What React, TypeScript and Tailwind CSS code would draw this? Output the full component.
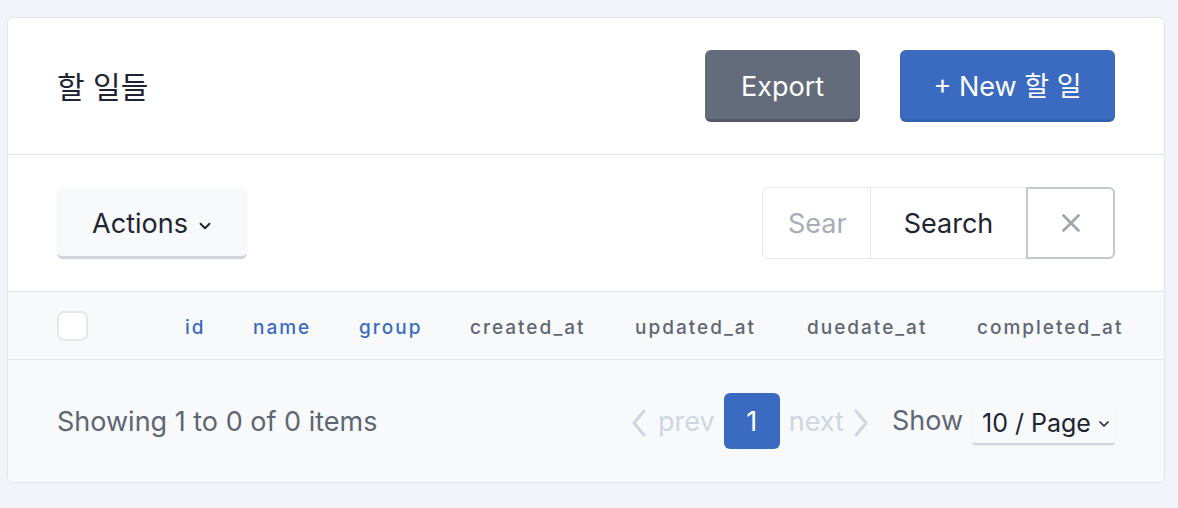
import { ChevronDown, X } from "lucide-react"

const columns = [
  { name: "id", width: "w-[68px]", active: true },
  { name: "name", width: "w-[106px]", active: true },
  { name: "group", width: "w-[111px]", active: true },
  { name: "created_at", width: "w-[165px]", active: false },
  { name: "updated_at", width: "w-[172px]", active: false },
  { name: "duedate_at", width: "w-[170px]", active: false },
  { name: "completed_at", width: "w-[150px]", active: false },
]

function Chevron({ dir }: { dir: "left" | "right" }) {
  return (
    <svg width="14" height="30" viewBox="0 0 14 30" fill="none" stroke="currentColor" strokeWidth="3" strokeLinecap="round" strokeLinejoin="round">
      {dir === "left" ? <polyline points="12,3 2,15 12,27" /> : <polyline points="2,3 12,15 2,27" />}
    </svg>
  )
}

export default function App() {
  return (
    <div className="min-h-[508px] bg-[#f1f4f9] pl-[7px] pt-[17px] font-['Inter','Noto_Sans_CJK_KR',sans-serif]">
      <div className="w-[1158px] overflow-hidden rounded-[6px] border border-[#e2e5ea] bg-white">
        {/* Header */}
        <div className="flex items-center justify-between border-b border-[#e2e5ea] px-[49px] py-[32px]">
          <h1 className="mt-[3px] text-[30px] text-[#1f2433]">할 일들</h1>
          <div className="flex gap-[40px]">
            <button className="h-[72px] w-[155px] rounded-[6px] border-b-[3px] border-[#525866] bg-[#646b7a] pt-[5px] text-[27px] text-white">
              Export
            </button>
            <button className="h-[72px] w-[215px] rounded-[6px] border-b-[3px] border-[#3260b0] bg-[#3a6bc1] pt-[5px] text-[27px] text-white">
              + New 할 일
            </button>
          </div>
        </div>

        {/* Toolbar */}
        <div className="flex items-center justify-between border-b border-[#e2e5ea] px-[49px] py-[32px]">
          <button className="flex h-[71px] w-[190px] items-center justify-center gap-[8px] rounded-[6px] border-b-[3px] border-[#cfd3da] bg-[#f8f9fb] pl-[2px] pt-[6px] text-[27px] text-[#1f2433] shadow-[0_1px_2px_rgba(0,0,0,0.04)]">
            Actions
            <ChevronDown className="mt-[3px] h-[18px] w-[18px]" strokeWidth={2.5} />
          </button>
          <div className="flex h-[72px] w-[353px] rounded-[6px] border border-[#e4e6ea]">
            <div className="flex w-[107px] items-center overflow-hidden whitespace-nowrap pl-[25px] pt-[3px] text-[27px] text-[#a7acb6]">
              Sear
            </div>
            <button className="w-[157px] border-l border-[#e4e6ea] pt-[3px] text-[27px] text-[#1f2433]">
              Search
            </button>
            <button className="-my-px -mr-px flex w-[89px] items-center justify-center rounded-r-[6px] border-2 border-[#c4c8cf] text-[#a0a5ae]">
              <X className="h-[30px] w-[30px]" strokeWidth={2.2} />
            </button>
          </div>
        </div>

        {/* Table header */}
        <div className="flex h-[68px] items-center border-b border-[#e2e5ea] bg-[#f8f9fb] pl-[49px]">
          <div className="mt-[1px] h-[30px] w-[31px] rounded-[7px] border-2 border-[#e4e6ea] bg-white" />
          <div className="ml-[97px] mt-[5px] flex">
            {columns.map((col) => (
              <div
                key={col.name}
                className={`${col.width} shrink-0 text-[19px] font-medium tracking-[2px] ${col.active ? "text-[#3a6bc1]" : "text-[#5f6673]"}`}
              >
                {col.name}
              </div>
            ))}
          </div>
        </div>

        {/* Footer */}
        <div className="flex h-[122px] items-center justify-between bg-[#f8f9fb] px-[49px]">
          <p className="mt-[3px] text-[27px] text-[#5f6673]">Showing 1 to 0 of 0 items</p>
          <div className="flex items-center">
            <div className="mt-[3px] flex items-center gap-[12px] text-[27px] text-[#cfd6e1]">
              <Chevron dir="left" />
              <span>prev</span>
            </div>
            <div className="ml-[9px] flex h-[56px] w-[56px] items-center justify-center rounded-[6px] bg-[#3a6bc1] pt-[2px] text-[27px] text-white">
              1
            </div>
            <div className="ml-[9px] mt-[3px] flex items-center gap-[10px] text-[27px] text-[#cfd6e1]">
              <span>next</span>
              <Chevron dir="right" />
            </div>
            <span className="ml-[24px] text-[27px] text-[#5f6673]">Show</span>
            <div className="ml-[9px] mt-[6px] flex h-[42px] w-[143px] items-center justify-between rounded-[3px] border-b-2 border-[#d1d5db] pl-[10px] pr-[3px] pt-[2px] text-[25px] text-[#1f2433] shadow-[0_1px_2px_rgba(0,0,0,0.04)]">
              10 / Page
              <ChevronDown className="h-[16px] w-[16px]" strokeWidth={2.5} />
            </div>
          </div>
        </div>
      </div>
    </div>
  )
}
